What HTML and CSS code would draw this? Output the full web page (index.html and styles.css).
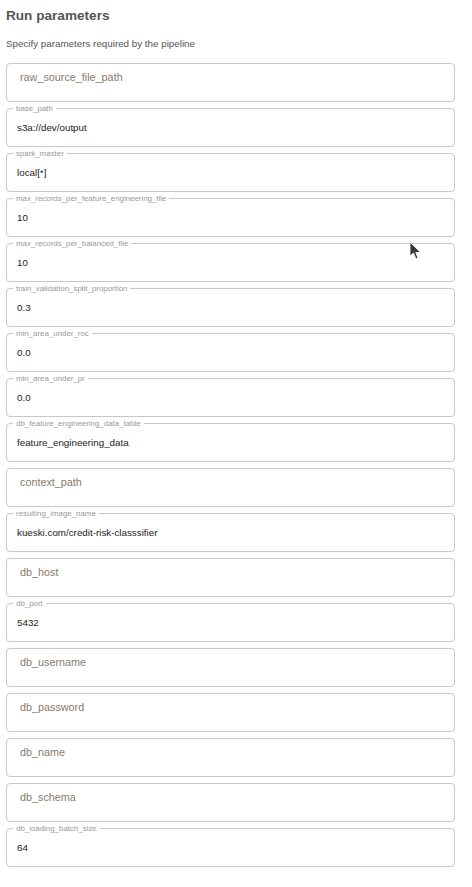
FILE: index.html
```html
<!DOCTYPE html>
<html>
<head>
<meta charset="utf-8">
<link rel="stylesheet" href="styles.css">
</head>
<body>
<div class="page">
  <h1 class="title">Run parameters</h1>
  <p class="subtitle">Specify parameters required by the pipeline</p>
  <div class="fields">
    <div class="field empty"><span class="placeholder">raw_source_file_path</span></div>
    <div class="field"><span class="legend">base_path</span><span class="value">s3a://dev/output</span></div>
    <div class="field"><span class="legend">spark_master</span><span class="value">local[*]</span></div>
    <div class="field"><span class="legend">max_records_per_feature_engineering_file</span><span class="value">10</span></div>
    <div class="field"><span class="legend">max_records_per_balanced_file</span><span class="value">10</span></div>
    <div class="field"><span class="legend">train_validation_split_proportion</span><span class="value">0.3</span></div>
    <div class="field"><span class="legend">min_area_under_roc</span><span class="value">0.0</span></div>
    <div class="field"><span class="legend">min_area_under_pr</span><span class="value">0.0</span></div>
    <div class="field"><span class="legend">db_feature_engineering_data_table</span><span class="value">feature_engineering_data</span></div>
    <div class="field empty"><span class="placeholder">context_path</span></div>
    <div class="field"><span class="legend">resulting_image_name</span><span class="value">kueski.com/credit-risk-classsifier</span></div>
    <div class="field empty"><span class="placeholder">db_host</span></div>
    <div class="field"><span class="legend">db_port</span><span class="value">5432</span></div>
    <div class="field empty"><span class="placeholder">db_username</span></div>
    <div class="field empty"><span class="placeholder">db_password</span></div>
    <div class="field empty"><span class="placeholder">db_name</span></div>
    <div class="field empty"><span class="placeholder">db_schema</span></div>
    <div class="field"><span class="legend">db_loading_batch_size</span><span class="value">64</span></div>
  </div>
</div>
<svg class="cursor" width="14" height="22" viewBox="0 0 14 22"><path d="M1 1 L1 15 L4.5 12 L7 18 L9 17 L6.8 11.5 L11.5 11.5 Z" fill="#3a3a3a" stroke="#ffffff" stroke-width="0.8" stroke-linejoin="round"/></svg>
</body>
</html>
```
FILE: styles.css
```css
html, body {
  margin: 0;
  padding: 0;
  background: #ffffff;
}
body {
  font-family: "Liberation Sans", Arial, sans-serif;
  position: relative;
}
.page {
  padding: 7px 17px 0 6px;
}
.title {
  margin: 0;
  font-size: 13.6px;
  line-height: 17px;
  font-weight: bold;
  color: #555555;
}
.subtitle {
  margin: 14px 0 0 0;
  font-size: 9.8px;
  line-height: 12px;
  color: #555555;
}
.fields {
  margin-top: 13px;
  display: flex;
  flex-direction: column;
  gap: 6px;
}
.field {
  position: relative;
  box-sizing: border-box;
  height: 39px;
  border: 1px solid #c8c8c8;
  border-radius: 4px;
  display: flex;
  align-items: center;
  padding-left: 10px;
}
.field.empty {
  align-items: flex-start;
  padding-left: 13px;
  padding-top: 7px;
}
.placeholder {
  font-size: 10.8px;
  line-height: 13px;
  color: #8a7a6a;
}
.value {
  font-size: 9.8px;
  line-height: 12px;
  color: #222222;
  margin-top: 0;
}
.legend {
  position: absolute;
  top: -5px;
  left: 6px;
  padding: 0 3px;
  background: #ffffff;
  font-size: 7.9px;
  line-height: 9px;
  color: #999999;
}
.cursor {
  position: absolute;
  left: 409px;
  top: 241px;
}
```
